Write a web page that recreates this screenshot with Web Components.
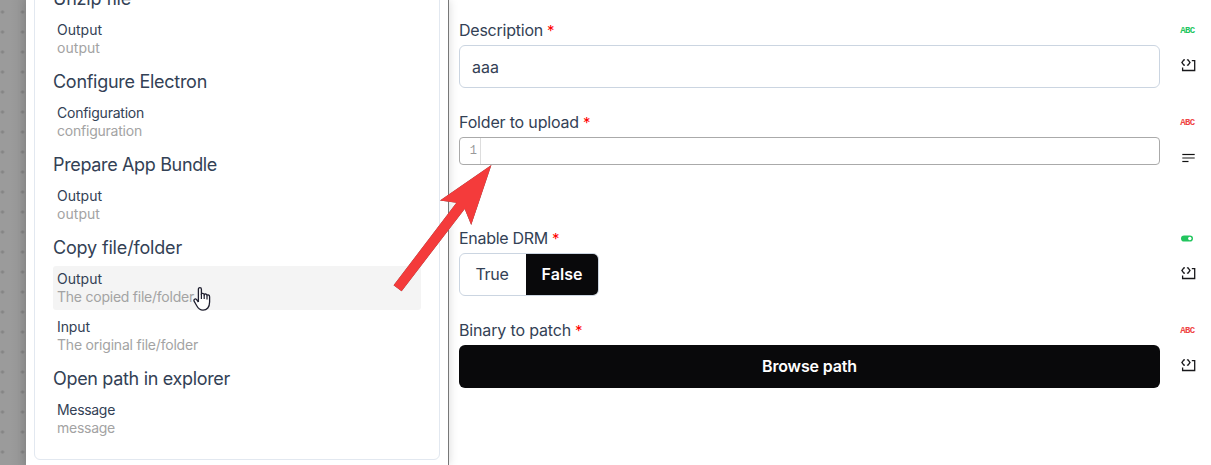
<!DOCTYPE html>
<html lang="en">
<head>
<meta charset="utf-8">
<title>Pipeline editor</title>
<style>
html,body{margin:0;height:100%;overflow:hidden;background:#fff}
body{font-family:Inter,"Liberation Sans",sans-serif;font-weight:370;color:#334155}
</style>
</head>
<body>
<pipeline-editor></pipeline-editor>
<script>
const define=(name,html,setup)=>{
  const t=document.createElement('template');t.innerHTML=html;
  customElements.define(name,class extends HTMLElement{
    constructor(){super();this.attachShadow({mode:'open'}).append(t.content.cloneNode(true))}
    connectedCallback(){if(setup)setup(this,this.shadowRoot)}
  });
};

/* A single line of text tracked to occupy a given width. */
define('tracked-text','<style>:host{display:inline-block;white-space:nowrap}span{display:inline-block}</style><span><slot></slot></span>',(h,r)=>{
  const w=+h.getAttribute('w'),s=r.querySelector('span');
  s.style.letterSpacing='0';
  const n=h.textContent.length,natural=s.getBoundingClientRect().width;
  s.style.letterSpacing=((w-natural)/n).toFixed(3)+'px';
});

define('type-icon',`<style>
:host{display:flex;width:14px;height:12px;align-items:center;justify-content:center;color:#22c55e}
:host([tone=red]){color:#ef4444}
b{font:bold 9px/13px "Liberation Mono",monospace;letter-spacing:-.7px;transform:translateX(.3px) scaleY(1.1)}
svg{display:none}:host([kind=toggle]) b{display:none}:host([kind=toggle]) svg{display:block;margin-top:-1px}
</style><b>ABC</b><svg width="12" height="7" viewBox="0 0 12 7"><rect y=".4" width="12" height="6.2" rx="3.1" fill="currentColor"/><circle cx="8.8" cy="3.5" r="1.7" fill="#fff"/></svg>`);

define('mode-icon',`<style>
:host{display:block;width:16px;height:16px}svg{display:none}
:host([kind=code]) .code,:host([kind=lines]) .lines{display:block}
</style>
<svg class="code" width="16" height="16" fill="none" stroke="#18181b" stroke-width="1.3"><path d="M5 1.9H3.8L1.9 4.5 3.8 7.1H5M6.9 1.9H8.1L10 4.5 8.1 7.1H6.9M11.8 2.7H14.7V12.5H2.6V9.6"/></svg>
<svg class="lines" width="16" height="16" fill="none"><path d="M2.3 4.5H14.7" stroke="#111" stroke-width="1.2"/><path d="M2.3 8H14.7" stroke="#777" stroke-width="1.7"/><path d="M2.3 11.5H8.5" stroke="#111" stroke-width="1.2"/></svg>`);

define('output-item',`<style>
:host{display:block;height:36px;padding:4px;border-radius:3px;font-size:14px;line-height:18px;color:#334155}
:host([active]){background:#f4f4f4}
div{height:18px}.sub{color:#a3a3a3;font-weight:400}
</style><div><slot></slot></div><div class="sub"><slot name="sub"></slot></div>`);

define('step-group',`<style>
:host{display:block}h3{margin:0;height:39px;line-height:41px;font-size:18px;font-weight:370;color:#334155}
.items{display:grid;gap:4px}
</style><h3><slot name="title"></slot></h3><div class="items"><slot></slot></div>`);

define('steps-panel',`<style>
:host{display:block;box-sizing:border-box;width:423px;height:465px;border-right:1px solid #777;background:#fff;overflow:hidden;padding:0 8px;box-shadow:0 0 9px rgba(0,0,0,.16)}
.card{box-sizing:border-box;height:490px;margin-top:-30px;padding:7px 18px 0;border:1px solid #e2e8f0;border-radius:6px}
</style><div class="card"><slot></slot></div>`);

define('form-row',`<style>
:host{display:grid;grid-template-columns:701px 16px;column-gap:20px;height:92px;align-content:start}
:host([tall]){height:116px}
.label{height:30px;line-height:31px;font-size:16px;display:flex;gap:4px}.label b{color:#f00;font-weight:400;font-size:15px;line-height:31px}
.icons{display:flex;flex-direction:column;gap:21px;padding-top:10px}
</style><div><div class="label"><slot name="label"></slot><b>*</b></div><slot></slot></div><div class="icons"><slot name="icons"></slot></div>`);

define('text-field',`<style>:host{display:flex;align-items:center;box-sizing:border-box;height:43px;border:1px solid #cbd5e1;border-radius:6px;padding:0 12px;font-size:16px}</style><slot></slot>`);
define('code-field',`<style>:host{display:flex;box-sizing:border-box;height:28px;border:1px solid #aaa;border-radius:4px;overflow:hidden}
span{box-sizing:border-box;width:21px;border-right:1px solid #ddd;padding-right:3px;text-align:right;font:12px/27px "Liberation Mono",monospace;color:#999}</style><span>1</span>`);
define('bool-toggle',`<style>:host{display:flex;box-sizing:border-box;width:140px;height:43px;border:1px solid #cbd5e1;border-radius:6px;overflow:hidden;font-size:16px}
div{display:flex;align-items:center;justify-content:center;padding-bottom:1px}.no{width:66px;box-sizing:border-box;padding-right:2px}.yes{flex:1;background:#09090b;color:#fff;font-weight:600}</style>
<div class="no"><tracked-text w="33">True</tracked-text></div><div class="yes"><tracked-text w="41">False</tracked-text></div>`);
define('browse-button',`<style>:host{display:flex;align-items:center;justify-content:center;box-sizing:border-box;height:43px;padding-bottom:1px;border-radius:6px;background:#09090b;color:#fff;font-size:16px;font-weight:600}</style><slot></slot>`);

define('pointer-arrow',`<style>:host{position:absolute;left:390px;top:160px;pointer-events:none}svg{display:block;filter:drop-shadow(0 0 .6px #555)}</style>
<svg width="108" height="136" viewBox="390 160 108 136"><path fill="#f43b3b" d="M491.4 165 440 200.5 456.4 202.7 393.6 285.3 401.6 291.2 464.7 209 471.2 225Z"/></svg>`);
define('hand-cursor',`<style>:host{position:absolute;left:193px;top:286px}svg{display:block}</style>
<svg width="20" height="26"><path fill="#fff" stroke="#1e1e2e" stroke-width="1.3" stroke-linejoin="round" d="M5.4 16V3.2C5.4 1 8.4 1 8.4 3.2V8.6C8.4 6.7 11.2 7 11.2 9 11.2 7.4 14 7.7 14 9.7 14 8.3 16.6 8.6 16.6 10.7V16C16.6 21 14 24.2 10 24.2 6.5 24.2 5.2 22.5 3.6 19.5L1.1 15.2C.4 13.6 2.2 12.1 3.6 13.6L5.4 16"/><path fill="none" stroke="#1e1e2e" stroke-width="1.2" d="M8.4 8V13M11.2 9V13M14 10V13.5"/></svg>`);

define('pipeline-editor',`<style>
:host{display:grid;grid-template-columns:26px 423px 1fr;width:1211px;height:465px;position:relative;overflow:hidden;background:#fff}
.canvas{background:linear-gradient(90deg,#0000 10px,#0000000c),radial-gradient(circle at 10px 10px,#858585 1.3px,#0000 1.9px) -7.5px 2px/20px 20px,#9b9b9b}
.form{padding:15px 0 0 10px}
</style>
<div class="canvas"></div>
<steps-panel>
<step-group><tracked-text slot="title" w="78">Unzip file</tracked-text><output-item><tracked-text w="45">Output</tracked-text><tracked-text slot="sub" w="43">output</tracked-text></output-item></step-group>
<step-group><tracked-text slot="title" w="154">Configure Electron</tracked-text><output-item><tracked-text w="87">Configuration</tracked-text><tracked-text slot="sub" w="85">configuration</tracked-text></output-item></step-group>
<step-group><tracked-text slot="title" w="164">Prepare App Bundle</tracked-text><output-item><tracked-text w="45">Output</tracked-text><tracked-text slot="sub" w="43">output</tracked-text></output-item></step-group>
<step-group><tracked-text slot="title" w="129">Copy file/folder</tracked-text><output-item active><tracked-text w="45">Output</tracked-text><tracked-text slot="sub" w="137">The copied file/folder</tracked-text></output-item><output-item><tracked-text w="33">Input</tracked-text><tracked-text slot="sub" w="141">The original file/folder</tracked-text></output-item></step-group>
<step-group><tracked-text slot="title" w="177">Open path in explorer</tracked-text><output-item><tracked-text w="58">Message</tracked-text><tracked-text slot="sub" w="58">message</tracked-text></output-item></step-group>
</steps-panel>
<div class="form">
<form-row><tracked-text slot="label" w="84">Description</tracked-text><text-field><tracked-text w="27">aaa</tracked-text></text-field><type-icon slot="icons"></type-icon><mode-icon slot="icons" kind="code"></mode-icon></form-row>
<form-row tall><tracked-text slot="label" w="120">Folder to upload</tracked-text><code-field></code-field><type-icon slot="icons" tone="red"></type-icon><mode-icon slot="icons" kind="lines"></mode-icon></form-row>
<form-row><tracked-text slot="label" w="89">Enable DRM</tracked-text><bool-toggle></bool-toggle><type-icon slot="icons" kind="toggle"></type-icon><mode-icon slot="icons" kind="code"></mode-icon></form-row>
<form-row><tracked-text slot="label" w="112">Binary to patch</tracked-text><browse-button><tracked-text w="95">Browse path</tracked-text></browse-button><type-icon slot="icons" tone="red"></type-icon><mode-icon slot="icons" kind="code"></mode-icon></form-row>
</div>
<pointer-arrow></pointer-arrow><hand-cursor></hand-cursor>`);
</script>
</body>
</html>
